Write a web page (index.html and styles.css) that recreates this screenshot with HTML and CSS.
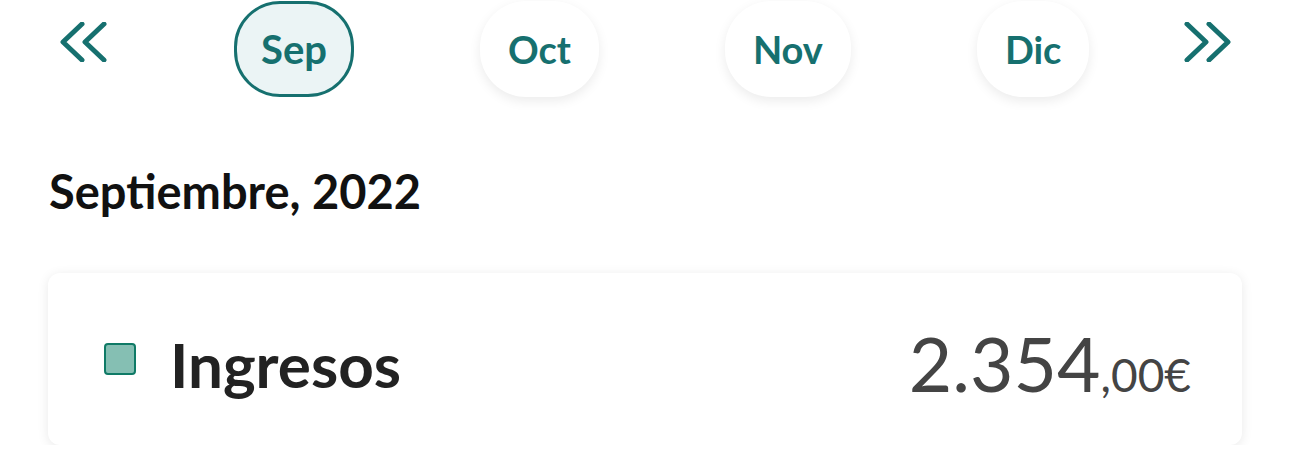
FILE: index.html
```html
<!DOCTYPE html>
<html lang="es">
<head>
    <meta charset="UTF-8">
    <meta name="viewport" content="width=device-width, initial-scale=1.0">
    <title>Resumen mensual</title>
    <link rel="stylesheet" href="styles.css">
</head>
<body>
    <!-- Selector de meses -->
    <nav class="months">
        <button class="arrow" aria-label="Anterior">
            <svg width="48" height="40" viewBox="0 0 48 40">
                <path d="M22 2 L3 20 L22 38 M44 2 L25 20 L44 38" fill="none" stroke="#16706f" stroke-width="5" stroke-linecap="round" stroke-linejoin="round"/>
            </svg>
        </button>
        <div class="strip">
            <button class="month active">Sep</button>
            <button class="month">Oct</button>
            <button class="month">Nov</button>
            <button class="month">Dic</button>
        </div>
        <button class="arrow arrow-right" aria-label="Siguiente">
            <svg width="48" height="40" viewBox="0 0 48 40">
                <path d="M4 2 L23 20 L4 38 M26 2 L45 20 L26 38" fill="none" stroke="#16706f" stroke-width="5" stroke-linecap="round" stroke-linejoin="round"/>
            </svg>
        </button>
    </nav>

    <main>
        <h2 class="period">Septiembre, 2022</h2>

        <!-- Tarjeta de ingresos -->
        <div class="card">
            <span class="swatch"></span>
            <span class="label">Ingresos</span>
            <span class="amount">2.354<small>,00€</small></span>
        </div>
    </main>
</body>
</html>
```

FILE: styles.css
```css
/* Estilos generales */
body {
    margin: 0;
    font-family: Lato, "Open Sans", sans-serif;
    background-color: #ffffff;
    color: #222222;
}

/* Selector de meses */
.months {
    display: flex;
    align-items: flex-start;
    padding: 0 59px 0 60px;
}

.arrow {
    background: none;
    border: none;
    padding: 0;
    margin-top: 22px;
    width: 48px;
    height: 40px;
    cursor: pointer;
}

.arrow svg {
    display: block;
}

.strip {
    flex: 1;
    display: flex;
    gap: 126px;
    overflow: hidden;
    margin: 0 18px 0 17px;
    padding: 1px 0 16px 109px;
}

.month {
    flex: none;
    height: 96px;
    padding: 0 25px;
    border: 3px solid transparent;
    border-radius: 46px;
    background-color: #ffffff;
    box-shadow: 0 4px 12px rgba(0, 0, 0, 0.08);
    font-family: inherit;
    font-size: 38px;
    font-weight: 700;
    color: #16706f;
    cursor: pointer;
}

.month.active {
    padding: 0 24px;
    border-color: #16706f;
    background-color: #ebf4f5;
    box-shadow: none;
    font-size: 40px;
}

/* Contenido */
main {
    padding: 0 48px;
}

.period {
    margin: 50px 0 54px 1px;
    font-size: 47px;
    font-weight: 700;
    color: #111111;
}

/* Tarjeta */
.card {
    display: flex;
    align-items: center;
    height: 172px;
    padding: 0 51px 0 56px;
    border-radius: 12px;
    background-color: #ffffff;
    box-shadow: 0 2px 12px rgba(0, 0, 0, 0.09);
}

.swatch {
    width: 28px;
    height: 28px;
    border: 2px solid #0f7a66;
    border-radius: 4px;
    background-color: #85bfb3;
}

.label {
    margin: 10px 0 0 34px;
    font-size: 62px;
    font-weight: 700;
    color: #222222;
}

.amount {
    margin: 8px 0 0 auto;
    font-size: 75px;
    font-weight: 400;
    color: #444444;
}

.amount small {
    font-size: 46px;
}
```
